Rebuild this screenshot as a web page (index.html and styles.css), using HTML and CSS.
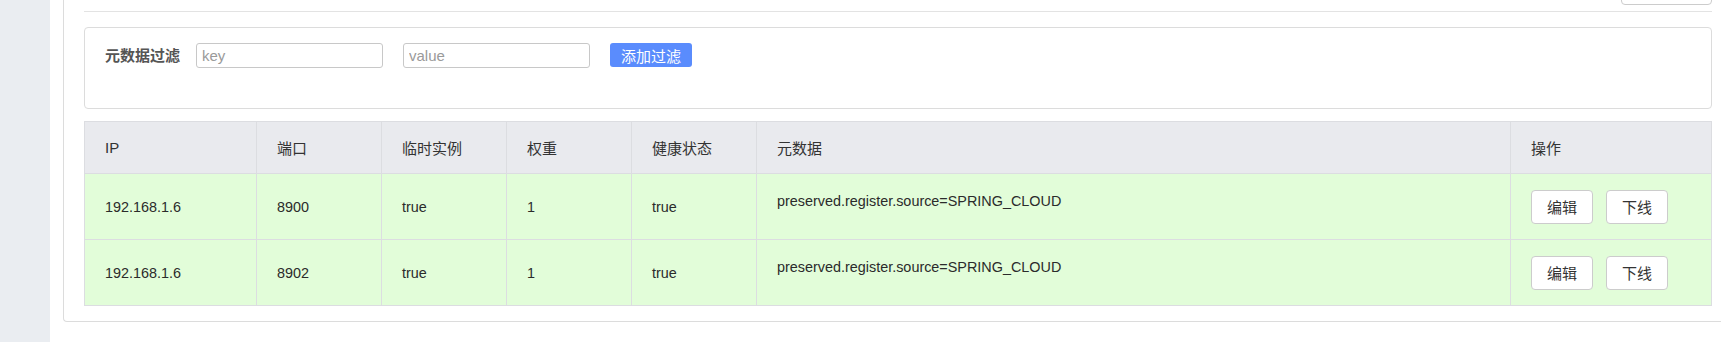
FILE: index.html
```html
<!DOCTYPE html>
<html lang="zh-CN">

<head>
  <meta charset="UTF-8">
  <title>服务详情</title>
  <link rel="stylesheet" href="styles.css">
</head>

<body>
  <div class="sidebar"></div>

  <div class="main">
    <div class="panel">
      <div class="top-bar">
        <button class="btn back-btn" type="button" aria-label="返回"></button>
      </div>

      <form class="filter-box" id="filter-form">
        <label class="filter-label">元数据过滤</label>
        <input class="filter-input" type="text" name="key" placeholder="key" />
        <input class="filter-input" type="text" name="value" placeholder="value" />
        <button class="btn btn-primary" type="submit">添加过滤</button>
      </form>

      <table class="instance-table">
        <thead>
          <tr>
            <th class="col-ip">IP</th>
            <th class="col-small">端口</th>
            <th class="col-small">临时实例</th>
            <th class="col-small">权重</th>
            <th class="col-small">健康状态</th>
            <th>元数据</th>
            <th class="col-op">操作</th>
          </tr>
        </thead>
        <tbody>
          <tr>
            <td>192.168.1.6</td>
            <td>8900</td>
            <td>true</td>
            <td>1</td>
            <td>true</td>
            <td><div class="meta">preserved.register.source=SPRING_CLOUD</div></td>
            <td>
              <button class="btn btn-row" type="button">编辑</button>
              <button class="btn btn-row" type="button">下线</button>
            </td>
          </tr>
          <tr>
            <td>192.168.1.6</td>
            <td>8902</td>
            <td>true</td>
            <td>1</td>
            <td>true</td>
            <td><div class="meta">preserved.register.source=SPRING_CLOUD</div></td>
            <td>
              <button class="btn btn-row" type="button">编辑</button>
              <button class="btn btn-row" type="button">下线</button>
            </td>
          </tr>
        </tbody>
      </table>
    </div>
  </div>
</body>

</html>
```

FILE: styles.css
```css
* {
  box-sizing: border-box;
}

body {
  margin: 0;
  display: flex;
  height: 342px;
  overflow: hidden;
  font-family: "Liberation Sans", "Noto Sans CJK SC", sans-serif;
  font-size: 14px;
  color: #333;
  background-color: #fff;
}

.sidebar {
  width: 50px;
  flex-shrink: 0;
  background-color: #eaedf1;
}

.main {
  flex: 1;
  padding-left: 13px;
}

.panel {
  border-left: 1px solid #dcdcdc;
  border-bottom: 1px solid #dcdcdc;
  border-bottom-left-radius: 4px;
  padding: 0 9px 15px 20px;
}

.top-bar {
  height: 12px;
  padding-bottom: 6px;
  display: flex;
  justify-content: flex-end;
  align-items: flex-end;
  border-bottom: 1px solid #e3e3e3;
}

.btn {
  font-family: "Liberation Sans", "Noto Sans CJK SC", sans-serif;
  font-size: 15px;
  color: #333;
  background-color: #fff;
  border: 1px solid #ccc;
  border-radius: 4px;
  padding: 0;
  cursor: pointer;
}

.back-btn {
  flex-shrink: 0;
  width: 91px;
  height: 30px;
}

.filter-box {
  margin: 15px 0 0;
  height: 82px;
  padding: 15px 20px;
  border: 1px solid #dcdcdc;
  border-radius: 4px;
  display: flex;
  align-items: flex-start;
}

.filter-label {
  font-size: 15px;
  font-weight: bold;
  color: #555;
  line-height: 25px;
  margin-right: 16px;
}

.filter-input {
  width: 187px;
  height: 25px;
  margin-right: 20px;
  padding: 0 5px;
  border: 1px solid #c8c8c8;
  border-radius: 3px;
  font-family: "Liberation Sans", "Noto Sans CJK SC", sans-serif;
  font-size: 15px;
  color: #333;
}

.filter-input::placeholder {
  color: #9a9a9a;
}

.btn-primary {
  width: 82px;
  height: 24px;
  border: none;
  border-radius: 3px;
  background-color: #5a8cfd;
  color: #fff;
}

.instance-table {
  width: 100%;
  margin-top: 12px;
  border-collapse: collapse;
  table-layout: fixed;
}

.instance-table th,
.instance-table td {
  border: 1px solid #dcdde1;
  padding: 0 20px;
  text-align: left;
  font-weight: normal;
}

.instance-table th {
  height: 52px;
  font-size: 15px;
  background-color: #e9eaee;
}

.instance-table td {
  height: 66px;
  font-size: 14.4px;
  color: #2b2b2b;
  background-color: #e2fdd9;
}

.col-ip {
  width: 172px;
}

.col-small {
  width: 125px;
}

.col-op {
  width: 201px;
}

.meta {
  padding-bottom: 12px;
}

.btn-row {
  width: 62px;
  height: 34px;
  margin-right: 9px;
}
```
